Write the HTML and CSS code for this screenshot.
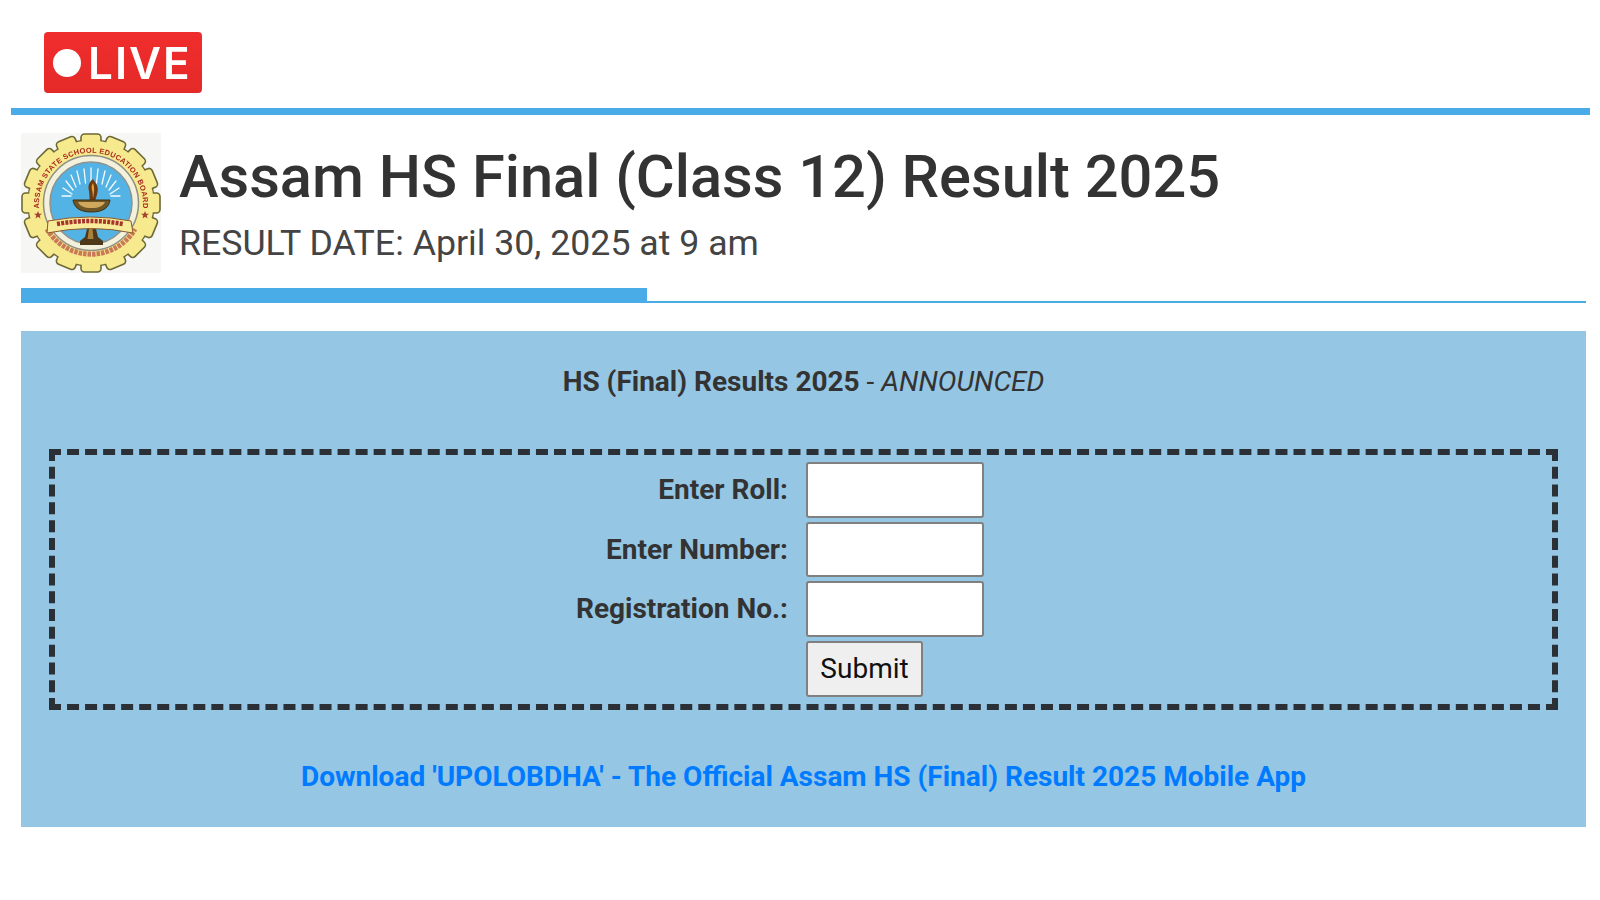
FILE: index.html
```html
<!DOCTYPE html>
<html lang="en">
<head>
<meta charset="utf-8">
<title>Assam HS Final (Class 12) Result 2025</title>
<link rel="stylesheet" href="styles.css">
</head>
<body>
<div class="top">
  <div class="live"><span class="live-dot"></span><span class="live-text">LIVE</span></div>
</div>
<div class="rule"></div>
<main class="content">
  <header class="head">
    <svg class="logo" viewBox="0 0 140 140" aria-label="Assam State School Education Board logo">
      <defs>
        <rect id="tooth" x="60" y="1" width="20" height="12" rx="3.500"/>
        <path id="arc-top" d="M24 96 A52 52 0 1 1 116 96"/>
        <polygon id="star" points="0,-4 1.100,-1.200 4,-1.200 1.700,.6 2.500,3.500 0,1.800 -2.500,3.500 -1.700,.6 -4,-1.200 -1.100,-1.200"/>
      </defs>
      <rect width="140" height="140" fill="#f6f6f4"/>
      <g fill="#f7e98e" stroke="#6e6a36" stroke-width="1.600">
        <circle cx="70" cy="70" r="63"/>
        <use href="#tooth"/>
        <use href="#tooth" transform="rotate(22.5 70 70)"/>
        <use href="#tooth" transform="rotate(45 70 70)"/>
        <use href="#tooth" transform="rotate(67.5 70 70)"/>
        <use href="#tooth" transform="rotate(90 70 70)"/>
        <use href="#tooth" transform="rotate(112.5 70 70)"/>
        <use href="#tooth" transform="rotate(135 70 70)"/>
        <use href="#tooth" transform="rotate(157.5 70 70)"/>
        <use href="#tooth" transform="rotate(180 70 70)"/>
        <use href="#tooth" transform="rotate(202.5 70 70)"/>
        <use href="#tooth" transform="rotate(225 70 70)"/>
        <use href="#tooth" transform="rotate(247.5 70 70)"/>
        <use href="#tooth" transform="rotate(270 70 70)"/>
        <use href="#tooth" transform="rotate(292.5 70 70)"/>
        <use href="#tooth" transform="rotate(315 70 70)"/>
        <use href="#tooth" transform="rotate(337.5 70 70)"/>
      </g>
      <circle cx="70" cy="70" r="62.500" fill="#f7e98e"/>
      <circle cx="70" cy="70" r="47.500" fill="#f3f0dc" stroke="#8f8f86" stroke-width="1.500"/>
      <circle cx="70" cy="70" r="41" fill="#52b3e4" stroke="#8e9290" stroke-width="1.500"/>
      <text class="logo-arc"><textPath href="#arc-top" startOffset="50%" text-anchor="middle">ASSAM STATE SCHOOL EDUCATION BOARD</textPath></text>
      <path d="M26 96 A51 51 0 0 0 114 96" fill="none" stroke="#bd5c48" stroke-width="5" stroke-dasharray="3.500 1" opacity=".8"/>
      <use href="#star" transform="translate(17 82)" fill="#a5402f"/>
      <use href="#star" transform="translate(124 82)" fill="#a5402f"/>
      <g stroke="#fff" stroke-width="1.300" stroke-linecap="round" opacity=".95">
        <path d="M70 35v14M63 36l1.500 14M77 36l-1.500 14M56 38l3 13M84 38l-3 13M50 42l5 12M90 42l-5 12M45 48l7 9M95 48l-7 9M42 55l9 6M98 55l-9 6M41 63h9M99 63h-9"/>
      </g>
      <path d="M72 46c-5 4-5 8-4 12 .5 3 .5 6 .5 9h6c1-4 3-9 2-13-.5-3-3-5-4.500-8z" fill="#6e3a14"/>
      <path d="M72 50c-2 3-1.500 6-.5 9l.5 6c1-4 2-10 0-15z" fill="#e2a035"/>
      <path d="M52 67h37c-1 7-6 12-18.500 12S53 74 52 67z" fill="#6d5526" stroke="#3f2f12" stroke-width="1"/>
      <path d="M57 69h27c-2 4-6 6-13.500 6S59 73 57 69z" fill="#cfa85e"/>
      <path d="M66 96h9l2 8 5 4v4H59v-4l5-4z" fill="#50391a"/>
      <path d="M68 96h3.500l1 10h-6z" fill="#a9813b"/>
      <path d="M27 88 Q70 80 110 88 L112 100 Q70 91 26 100z" fill="#f8ec9a" stroke="#8b5a2c" stroke-width="1"/>
      <path d="M36 91 Q70 85 102 91" fill="none" stroke="#a8352b" stroke-width="4.500" stroke-dasharray="3 1.200"/>
    </svg>
    <div class="head-text">
      <h1 class="title">Assam HS Final (Class 12) Result 2025</h1>
      <p class="date">RESULT DATE: April 30, 2025 at 9 am</p>
    </div>
  </header>
  <div class="divider"><span class="divider-thick"></span></div>
  <section class="panel">
    <p class="status"><strong>HS (Final) Results 2025</strong> - <em>ANNOUNCED</em></p>
    <form class="form-box">
      <div class="form-grid">
        <label class="form-label" for="roll">Enter Roll:</label>
        <input class="form-input" id="roll" type="text">
        <label class="form-label" for="num">Enter Number:</label>
        <input class="form-input" id="num" type="text">
        <label class="form-label" for="reg">Registration No.:</label>
        <input class="form-input" id="reg" type="text">
        <span></span>
        <button class="submit" type="button">Submit</button>
      </div>
    </form>
    <a class="app-link" href="#">Download 'UPOLOBDHA' - The Official Assam HS (Final) Result 2025 Mobile App</a>
  </section>
</main>
</body>
</html>
```
FILE: styles.css
```css
* { box-sizing: border-box; }
html, body { margin: 0; height: 100%; overflow: hidden; }
body { background: #fff; color: #333; font-family: Roboto, "Liberation Sans", sans-serif; }

.top { height: 108px; padding: 32px 0 0 44px; }
.live {
  width: 158px; height: 61px; background: linear-gradient(#f02d2d, #e42a28); border-radius: 4px;
  display: flex; align-items: center; padding-left: 9px; gap: 7px;
  filter: blur(.5px);
}
.live-dot { width: 28px; height: 28px; border-radius: 50%; background: #fff; flex: none; }
.live-text { color: #fff; font: 600 44px/1 Inter, Roboto, sans-serif; letter-spacing: 2px; }

.rule { height: 7px; margin: 0 10px 0 11px; background: #4aace6; }

.content { margin: 18px 14px 0 21px; }
.head { display: flex; gap: 18px; height: 155px; }
.logo { width: 140px; height: 140px; flex: none; filter: blur(.6px); }
.logo-arc { font: 700 7.400px "Liberation Sans", sans-serif; fill: #a8291f; letter-spacing: .3px; }
.title { margin: 11px 0 0; font-size: 59.600px; line-height: 67px; font-weight: 500; color: #333; }
.date { margin: 11px 0 0; font-size: 35.700px; line-height: 42px; color: #444; }

.divider { height: 15px; border-bottom: 2px solid #4aace6; }
.divider-thick { display: block; width: 626px; height: 15px; background: #4aace6; }

.panel {
  margin-top: 28px; height: 496px; background: #95c6e3;
  padding: 35px 28px 0; text-align: center; font-size: 28px;
}
.status { margin: 0; line-height: 32px; }
.status strong { font-weight: 700; }
.form-box { margin-top: 51px; height: 261px; border: 6px dashed #2b3036; padding: 7px 0 0; }
.form-grid { display: grid; grid-template-columns: 733px 178px; column-gap: 18px; row-gap: 4px; grid-auto-rows: 55.500px; justify-content: start; }
.form-label { font-weight: 700; font-size: 28px; text-align: right; align-self: center; }
.form-input { width: 178px; height: 55.500px; background: #fff; border: 2px solid #808080; border-radius: 3px; padding: 0; }
.submit { width: 117px; height: 56px; padding: 0; background: #efefef; border: 2px solid #808080; border-radius: 3px; font: 400 28px Roboto, sans-serif; color: #111; }
.app-link { display: block; margin-top: 51px; color: #007bff; font-weight: 700; font-size: 28px; line-height: 32px; text-decoration: none; }
```
